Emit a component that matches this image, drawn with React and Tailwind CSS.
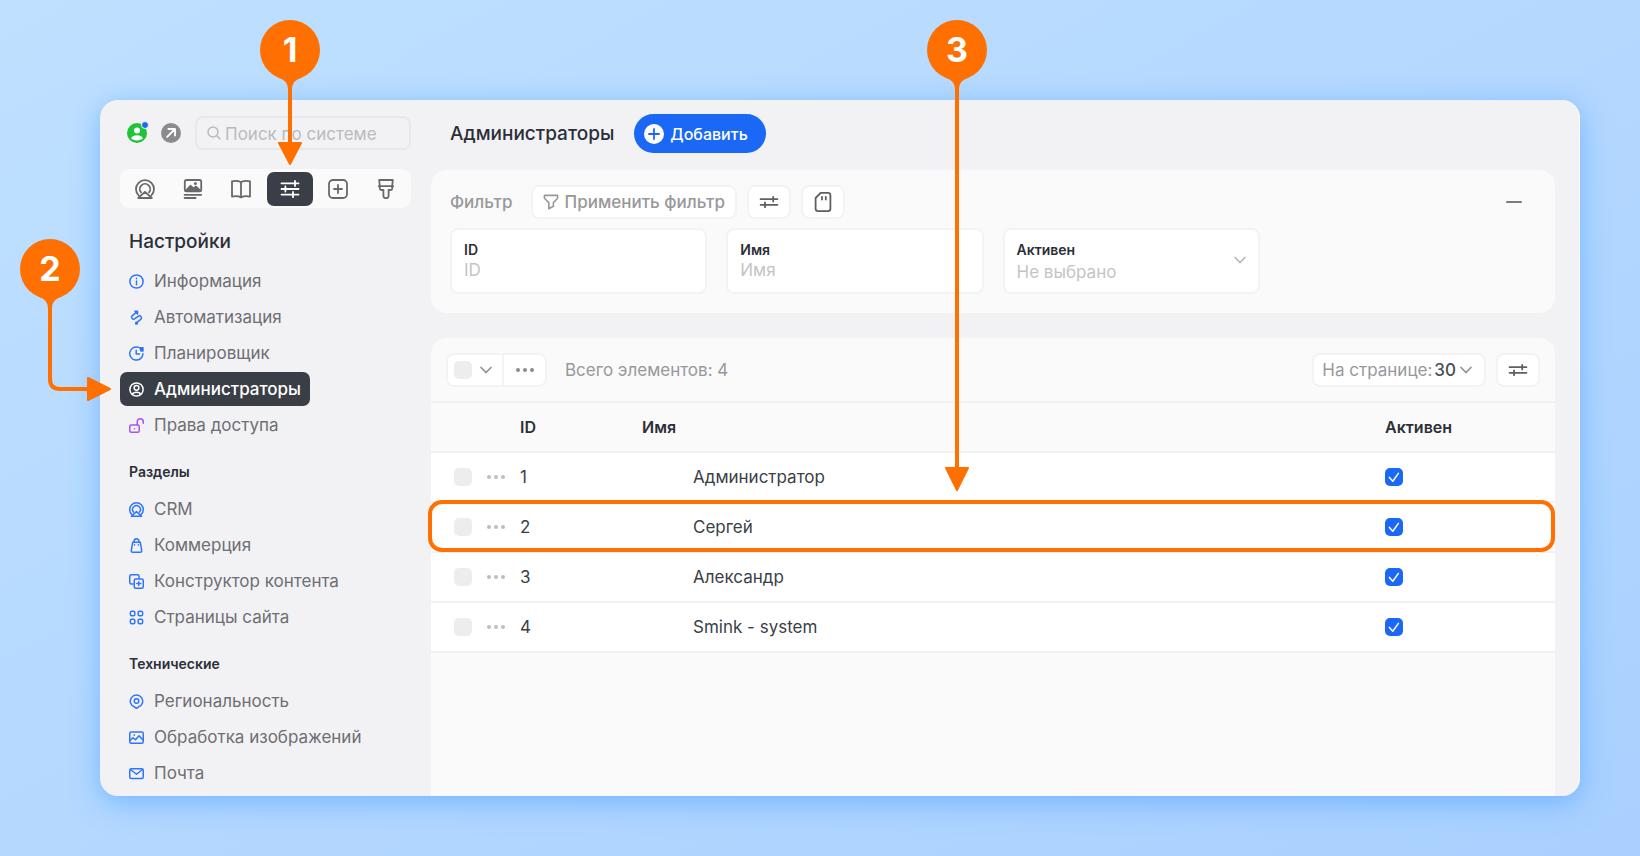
import { useState } from "react";
import { clsx } from "clsx";

function Icon({ children, className, box = 20, width = 1.8 }) {
  return (
    <svg
      viewBox={`0 0 ${box} ${box}`}
      className={clsx("shrink-0", className)}
      fill="none"
      stroke="currentColor"
      strokeWidth={width}
      strokeLinecap="round"
      strokeLinejoin="round"
      aria-hidden="true"
    >
      {children}
    </svg>
  );
}

const crmShape = (
  <>
    <path d="M3.8 16.6A9 9 0 1 1 16.2 16.6" />
    <path d="M6 13.4A5.2 5.2 0 1 1 14 13.4" />
    <path d="M10 12.8L3.2 19H16.8Z" />
  </>
);

const tabs = [
  { id: "crm", label: "CRM", shape: crmShape },
  {
    id: "content",
    label: "Контент",
    shape: (
      <>
        <rect x="1.8" y="1" width="16.4" height="11.4" rx="1.6" />
        <path d="M3 11.5L7.4 6.8L10.4 9.4L13 7.6L17 11.5Z" fill="currentColor" />
        <circle cx="12.4" cy="4.6" r="0.6" fill="currentColor" />
        <path d="M1.6 15.8H18.2M1.6 19H12.6" />
      </>
    ),
  },
  {
    id: "docs",
    label: "Справочник",
    shape: (
      <path d="M10 3.2C7.6 1.8 4 1.6 1 2.4V17.6C4 16.9 7.6 17.1 10 18.4C12.4 17.1 16 16.9 19 17.6V2.4C16 1.6 12.4 1.8 10 3.2ZM10 3.2V18.4" />
    ),
  },
  {
    id: "settings",
    label: "Настройки",
    shape: (
      <path d="M1.5 4.4H18.5M1.5 10H18.5M1.5 15.6H18.5M15 1.8V7M5.4 7.4V12.6M13 13V18.2" />
    ),
  },
  {
    id: "add",
    label: "Модули",
    shape: (
      <>
        <rect x="1" y="1" width="18" height="18" rx="4" />
        <path d="M10 6V14M6 10H14" />
      </>
    ),
  },
  {
    id: "design",
    label: "Оформление",
    shape: (
      <path d="M3.2 1H16.8L16.2 7V9.6Q16.2 11 14.8 11H12.6V17Q12.6 19.2 10 19.2Q7.4 19.2 7.4 17V11H5.2Q3.8 11 3.8 9.6V7ZM2.8 7.2H17.2" />
    ),
  },
];

const groups = [
  {
    title: null,
    items: [
      {
        name: "Информация",
        shape: (
          <>
            <circle cx="10" cy="10" r="8.8" />
            <path d="M10 9.4V14.4M10 5.8V6.2" />
          </>
        ),
      },
      {
        name: "Автоматизация",
        shape: (
          <>
            <path d="M9.6 3.4L4.4 7.4A2.7 2.7 0 0 0 7.8 11.6L12.2 8.4A2.7 2.7 0 0 1 15.6 12.6L10.4 16.8" />
            <path d="M8 1.8H11.4V5.2Z" fill="currentColor" />
            <circle cx="10" cy="17.6" r="1.2" fill="currentColor" />
          </>
        ),
      },
      {
        name: "Планировщик",
        shape: (
          <>
            <path d="M12.4 1.6A8.8 8.8 0 1 0 18.6 10.4" />
            <path d="M9.6 5.6V10.6H14" />
            <path d="M14.4 2.4H18.6V6.6H16Z" fill="currentColor" />
          </>
        ),
      },
      {
        name: "Администраторы",
        shape: (
          <>
            <circle cx="10" cy="10" r="8.8" />
            <circle cx="10" cy="7.8" r="3.2" />
            <path d="M4.6 16.6C5.6 12.6 14.4 12.6 15.4 16.6" />
          </>
        ),
      },
      {
        name: "Права доступа",
        color: "text-[#a855f0]",
        shape: (
          <>
            <rect x="1" y="9.4" width="12.6" height="9.6" rx="2" />
            <path d="M11 9V5A4 4 0 0 1 19 5V7M7.2 14.2H7.4" />
          </>
        ),
      },
    ],
  },
  {
    title: "Разделы",
    items: [
      { name: "CRM", shape: crmShape },
      {
        name: "Коммерция",
        shape: (
          <>
            <path d="M5 5.6H15L17 17.2Q17 19 15.2 19H4.8Q3 19 3 17.2Z" />
            <path d="M6.6 5.4C6.6 -0.4 13.4 -0.4 13.4 5.4M7.4 9V9.2M12.6 9V9.2" />
          </>
        ),
      },
      {
        name: "Конструктор контента",
        shape: (
          <>
            <path d="M5.6 13.4H3A2 2 0 0 1 1 11.4V3A2 2 0 0 1 3 1H11.4A2 2 0 0 1 13.4 3V5.4" />
            <rect x="7" y="6.6" width="12" height="12.4" rx="2" />
            <path d="M13 10.2V15.4M10.4 12.8H15.6" />
          </>
        ),
      },
      {
        name: "Страницы сайта",
        shape: (
          <>
            <rect x="1.8" y="1.8" width="6" height="6" rx="2" />
            <rect x="12.2" y="1.8" width="6" height="6" rx="2" />
            <rect x="1.8" y="12.2" width="6" height="6" rx="2" />
            <rect x="12.2" y="12.2" width="6" height="6" rx="2" />
          </>
        ),
      },
    ],
  },
  {
    title: "Технические",
    items: [
      {
        name: "Региональность",
        shape: (
          <>
            <path d="M10 19.2L7.6 17.4A8.2 8.2 0 1 1 12.4 17.4Z" />
            <circle cx="10" cy="9.4" r="3" />
          </>
        ),
      },
      {
        name: "Обработка изображений",
        shape: (
          <>
            <rect x="1" y="2.6" width="18" height="15" rx="2" />
            <path d="M1.4 14L5.4 10.4L8.6 13L13.4 7.6L18.6 13.4M6.6 6.8H7.4" />
          </>
        ),
      },
      {
        name: "Почта",
        shape: (
          <>
            <rect x="1" y="3.6" width="18" height="13" rx="2" />
            <path d="M2.4 5L10 11L17.6 5" />
          </>
        ),
      },
    ],
  },
];

const admins = [
  { id: 1, name: "Администратор" },
  { id: 2, name: "Сергей" },
  { id: 3, name: "Александр" },
  { id: 4, name: "Smink - system" },
];

const smallButton =
  "flex h-[34px] w-11 items-center justify-center rounded-lg border-2 border-[#f3f3f3] bg-white text-[#5f5f63]";

function SlidersIcon() {
  return (
    <Icon className="size-5">
      <path d="M1.6 7.2H18.4M1.6 12.8H18.4M14.2 4.8V9.6M6 10.4V15.2" />
    </Icon>
  );
}

function Dots({ className }) {
  return (
    <svg viewBox="0 0 20 6" className={className} fill="currentColor" aria-hidden="true">
      <circle cx="3" cy="3" r="2" />
      <circle cx="10" cy="3" r="2" />
      <circle cx="17" cy="3" r="2" />
    </svg>
  );
}

function Chevron({ className }) {
  return (
    <Icon className={className} box={12} width={1.6}>
      <path d="M1 3.4L6 8.6L11 3.4" />
    </Icon>
  );
}

function Checkbox({ label, checked, onChange }) {
  return (
    <span className="relative block size-[18px] shrink-0">
      <input
        type="checkbox"
        aria-label={label}
        checked={checked}
        onChange={onChange}
        className="block size-[18px] appearance-none rounded-[5px] bg-[#ededed] checked:bg-[#1a68f5]"
      />
      {checked && (
        <Icon className="pointer-events-none absolute inset-0 size-[18px] text-white" box={18} width={1.5}>
          <path d="M4.4 9.4L7.8 13.2L13.4 5.4" />
        </Icon>
      )}
    </span>
  );
}

function Sidebar() {
  const [tab, setTab] = useState("settings");

  return (
    <aside className="w-[331px] shrink-0 px-5 pt-4">
      <div className="flex items-center pl-[7px]">
        <a href="#profile" aria-label="Профиль" className="relative block size-5">
          <svg viewBox="0 0 20 20" className="size-5" aria-hidden="true">
            <circle cx="10" cy="10" r="10" fill="#1fc437" />
            <circle cx="10" cy="7.4" r="3" fill="#fff" />
            <path d="M4.2 15.6C5 11.2 15 11.2 15.8 15.6C14 18 6 18 4.2 15.6Z" fill="#fff" />
          </svg>
          <span className="absolute -top-0.5 -right-0.5 size-2 rounded-full border border-[#f2f2f5] bg-[#1a68f5]" />
        </a>
        <a href="#site" aria-label="Открыть сайт" className="ml-3.5 block size-5">
          <svg viewBox="0 0 20 20" className="size-5" aria-hidden="true">
            <circle cx="10" cy="10" r="10" fill="#8b8b8f" />
            <path
              d="M6.2 13.8L13.8 6.2M7.4 6H14V12.6"
              fill="none"
              stroke="#fff"
              strokeWidth="1.9"
              strokeLinecap="round"
              strokeLinejoin="round"
            />
          </svg>
        </a>
        <label className="ml-3.5 flex h-[34px] min-w-0 flex-1 items-center gap-1 rounded-lg border-2 border-[#e8e8ea] pl-2.5 text-[#bababd]">
          <Icon className="size-3.5" box={14} width={1.5}>
            <circle cx="6" cy="6" r="5" />
            <path d="M9.8 9.8L13 13" />
          </Icon>
          <input
            type="search"
            placeholder="Поиск по системе"
            className="h-[26px] w-full min-w-0 bg-transparent pt-0.5 text-[17px] leading-6 outline-none placeholder:text-[#bababd]"
          />
        </label>
      </div>

      <nav className="mt-[19px] flex h-[39px] items-center gap-0.5 rounded-[9px] bg-[#fafafa] px-0.5">
        {tabs.map((t) => (
          <button
            key={t.id}
            aria-label={t.label}
            onClick={() => setTab(t.id)}
            className={clsx(
              "flex h-[34px] flex-1 items-center justify-center rounded-[7px]",
              t.id === tab ? "bg-[#3a3f47] text-white" : "text-[#68686d]"
            )}
          >
            <Icon className="size-5">{t.shape}</Icon>
          </button>
        ))}
      </nav>

      <h2 className="mt-5 pl-[9px] text-[19px] leading-7 font-medium text-[#2b2f38]">Настройки</h2>

      {groups.map((group, i) => (
        <div key={i} className={i === 0 ? "mt-2" : "mt-5"}>
          {group.title && (
            <h3 className="mb-2.5 pl-[9px] text-sm leading-5 font-semibold text-[#2b2f38]">{group.title}</h3>
          )}
          <ul className="flex flex-col items-start gap-0.5">
            {group.items.map((item) => {
              const active = item.name === "Администраторы";
              return (
                <li key={item.name}>
                  <a
                    href="#"
                    className={clsx(
                      "flex h-[34px] items-center gap-2.5 rounded-[7px] px-[9px] text-[17px] leading-[26px] whitespace-nowrap",
                      active ? "bg-[#3a3f47] font-medium text-white" : "text-[#6e6e73]"
                    )}
                  >
                    <Icon
                      className={clsx("size-[15px]", active ? "text-white" : item.color || "text-[#2f75fa]")}
                      width={2}
                    >
                      {item.shape}
                    </Icon>
                    {item.name}
                  </a>
                </li>
              );
            })}
          </ul>
        </div>
      ))}
    </aside>
  );
}

function Filter() {
  return (
    <section className="rounded-2xl bg-[#fafafa] px-[19px] pt-[15px] pb-[19px]">
      <div className="flex items-center">
        <span className="text-[17px] leading-[26px] font-medium text-[#98989b]">Фильтр</span>
        <button className="ml-[18px] flex h-[34px] items-center gap-1.5 rounded-lg border-2 border-[#f3f3f3] bg-white px-2.5 text-[17px] leading-[26px] font-medium text-[#98989b]">
          <Icon className="size-4" box={16} width={1.6}>
            <path d="M1.4 1.4H14.6V4.2L10.4 8.6V12.2L5.8 14.8V8.6L1.4 4.2Z" />
          </Icon>
          Применить фильтр
        </button>
        <button aria-label="Настроить фильтр" className={clsx(smallButton, "ml-2.5")}>
          <SlidersIcon />
        </button>
        <button aria-label="Сохранить фильтр" className={clsx(smallButton, "ml-2.5")}>
          <Icon className="size-5">
            <path d="M7.6 0.9H15Q17.4 0.9 17.4 3.2V16.8Q17.4 19.1 15 19.1H5Q2.6 19.1 2.6 16.8V6Z" />
            <path d="M9 5V7.6M12.8 5V7.6" />
          </Icon>
        </button>
        <button aria-label="Свернуть" className="mr-3.5 ml-auto text-[#7c7c80]">
          <Icon className="size-4" box={16} width={2}>
            <path d="M1 8H15" />
          </Icon>
        </button>
      </div>

      <div className="mt-[9px] grid grid-cols-4 gap-[19px]">
        {["ID", "Имя"].map((name) => (
          <label
            key={name}
            className="flex h-[66px] flex-col justify-center rounded-lg border-2 border-[#f3f3f3] bg-white px-3"
          >
            <span className="text-sm leading-5 font-semibold text-[#2b2f38]">{name}</span>
            <input
              type="text"
              placeholder={name}
              className="h-[22px] w-full bg-transparent text-[17px] outline-none placeholder:text-[#c4c4c6]"
            />
          </label>
        ))}
        <label className="relative flex h-[66px] flex-col justify-center rounded-lg border-2 border-[#f3f3f3] bg-white px-3 pt-0.5">
          <span className="text-sm leading-5 font-semibold text-[#2b2f38]">Активен</span>
          <select className="h-6 w-full appearance-none bg-transparent text-[17px] text-[#c4c4c6] outline-none">
            <option>Не выбрано</option>
            <option>Да</option>
            <option>Нет</option>
          </select>
          <Chevron className="pointer-events-none absolute top-6 right-3 size-3 text-[#bcbcbe]" />
        </label>
      </div>
    </section>
  );
}

function AdminTable() {
  const [selected, setSelected] = useState([]);
  const [inactive, setInactive] = useState([]);

  const toggle = (list, setList, id) =>
    setList(list.includes(id) ? list.filter((x) => x !== id) : [...list, id]);

  return (
    <section className="mt-[25px] flex-1 rounded-t-2xl bg-[#fafafa]">
      <div className="flex h-[63px] items-center px-[15px]">
        <div className="flex h-[34px] items-stretch rounded-lg border-2 border-[#f3f3f3] bg-white">
          <div className="flex items-center gap-2 border-r-2 border-[#f3f3f3] pr-2.5 pl-1.5">
            <Checkbox
              label="Выбрать все"
              checked={selected.length === admins.length}
              onChange={() => setSelected(selected.length === admins.length ? [] : admins.map((a) => a.id))}
            />
            <Chevron className="size-3 text-[#98989b]" />
          </div>
          <button aria-label="Действия" className="flex w-[41px] items-center justify-center text-[#8b8b8f]">
            <Dots className="w-5" />
          </button>
        </div>
        <p className="ml-[18px] text-[17px] leading-[26px] text-[#98989b]">Всего элементов: 4</p>

        <label className="relative ml-auto flex h-[34px] items-center gap-0.5 rounded-lg border-2 border-[#f3f3f3] bg-white pl-2 text-[17px] leading-[26px] text-[#98989b]">
          На странице:
          <select className="field-sizing-content h-[26px] appearance-none bg-transparent pr-7 font-medium text-[#4a4d55] outline-none">
            <option>30</option>
            <option>50</option>
            <option>100</option>
          </select>
          <Chevron className="pointer-events-none absolute right-3 size-3 text-[#98989b]" />
        </label>
        <button aria-label="Настроить таблицу" className={clsx(smallButton, "ml-2.5")}>
          <SlidersIcon />
        </button>
      </div>

      <table className="w-full table-fixed border-collapse text-left text-[17px] leading-[26px] text-[#3a3f47]">
        <thead>
          <tr className="h-[50px] border-y-2 border-[#f1f1f2] text-base text-[#2b2f38]">
            <th className="w-[89px]" aria-label="Выбор" />
            <th className="w-[122px] font-semibold">ID</th>
            <th className="font-semibold">Имя</th>
            <th className="w-[170px] font-semibold">Активен</th>
          </tr>
        </thead>
        <tbody>
          {admins.map((admin) => (
            <tr key={admin.id} className="relative h-[50px] border-b-2 border-[#f1f1f2] bg-white">
              <td>
                <div className="flex items-center gap-3.5 pl-[23px]">
                  <Checkbox
                    label={`Выбрать ${admin.name}`}
                    checked={selected.includes(admin.id)}
                    onChange={() => toggle(selected, setSelected, admin.id)}
                  />
                  <button aria-label={`Действия: ${admin.name}`} className="text-[#bdbdc0]">
                    <Dots className="w-5" />
                  </button>
                </div>
              </td>
              <td>{admin.id}</td>
              <td className="pl-[51px]">{admin.name}</td>
              <td>
                <Checkbox
                  label={`${admin.name} активен`}
                  checked={!inactive.includes(admin.id)}
                  onChange={() => toggle(inactive, setInactive, admin.id)}
                />
                {admin.id === 2 && (
                  <span className="pointer-events-none absolute -inset-y-0.5 right-0 -left-[3px] rounded-[14px] border-4 border-[#ff7000]" />
                )}
              </td>
            </tr>
          ))}
        </tbody>
      </table>
    </section>
  );
}

// numbered drop with a pointer, drawn over the window
function Pin({ number, className, width, height, pointer, head }) {
  return (
    <div className={clsx("pointer-events-none absolute", className)}>
      <svg width={width} height={height} fill="none" aria-hidden="true">
        <circle cx="30" cy="30" r="30" fill="#ff7000" />
        <path d="M18 57.5C25 60 28 63 28 70H32C32 63 35 60 42 57.5Z" fill="#ff7000" />
        <path d={pointer} stroke="#ff7000" strokeWidth="4" />
        <path d={head} fill="#ff7000" stroke="#ff7000" strokeWidth="2" strokeLinejoin="round" />
      </svg>
      <span className="absolute top-0 left-0 flex h-[58px] w-[60px] items-center justify-center text-[34px] font-bold text-white">
        {number}
      </span>
    </div>
  );
}

export default function App() {
  return (
    <div className="relative min-h-screen bg-linear-to-br from-[#bfe0ff] to-[#a9d0ff] pt-[100px] pr-[60px] pb-[60px] pl-[100px] font-[Inter,'Noto_Sans',sans-serif]">
      <div className="flex h-[calc(100vh-160px)] min-h-[696px] overflow-hidden rounded-[18px] border-r border-white bg-[#f2f2f5] shadow-[0_6px_28px_rgba(64,156,255,0.55)]">
        <Sidebar />
        <main className="flex min-w-0 flex-1 flex-col pr-6">
          <header className="mb-[3px] flex h-[67px] shrink-0 items-center gap-5 pl-[19px]">
            <h1 className="text-[19px] leading-7 font-medium text-[#2b2f38]">Администраторы</h1>
            <button className="flex h-[39px] items-center gap-1.5 rounded-full bg-[#1a68f5] pr-4.5 pl-2.5 text-base font-medium text-white">
              <svg viewBox="0 0 20 20" className="size-5" aria-hidden="true">
                <circle cx="10" cy="10" r="10" fill="#fff" />
                <path d="M10 5V15M5 10H15" stroke="#1a68f5" strokeWidth="1.8" strokeLinecap="round" />
              </svg>
              Добавить
            </button>
          </header>
          <Filter />
          <AdminTable />
        </main>
      </div>

      <Pin
        number={1}
        className="top-5 left-[260px]"
        width={60}
        height={146}
        pointer="M30 60V124"
        head="M19 123H41L30 144Z"
      />
      <Pin
        number={2}
        className="top-[239px] left-5"
        width={92}
        height={164}
        pointer="M30 60V140Q30 150 40 150H70"
        head="M68 139V161L90 150Z"
      />
      <Pin
        number={3}
        className="top-5 left-[927px]"
        width={60}
        height={472}
        pointer="M30 60V450"
        head="M19 448H41L30 470Z"
      />
    </div>
  );
}
